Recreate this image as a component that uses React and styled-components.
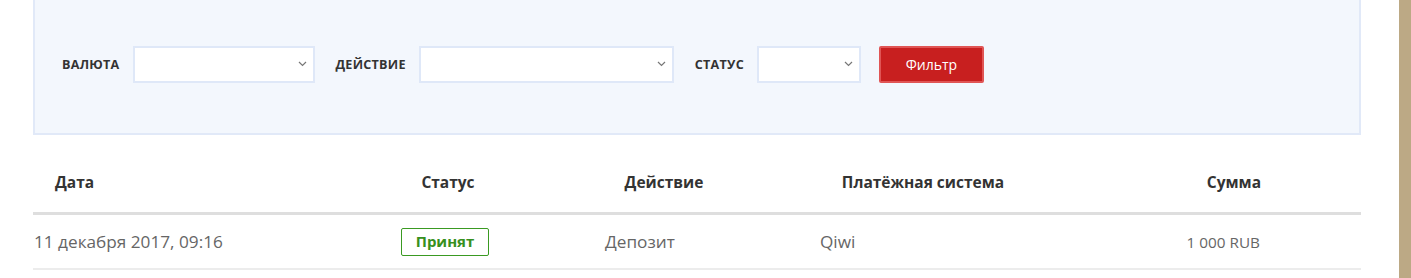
import React from "react";
import styled, { createGlobalStyle } from "styled-components";

const Global = createGlobalStyle`
  html, body { margin: 0; padding: 0; background: #fff; }
  body { font-family: "Open Sans", "Noto Sans", sans-serif; }
  * { box-sizing: border-box; }
`;

const Page = styled.div`
  display: flex;
  width: 1411px;
  height: 278px;
  overflow: hidden;
`;

const Main = styled.div`
  margin-left: 33px;
  width: 1328px;
  display: flex;
  flex-direction: column;
`;

const Side = styled.div`
  margin-left: auto;
  width: 12px;
  background: #bca985;
`;

const FilterPanel = styled.form`
  height: 135px;
  background: #f3f7fd;
  border: 2px solid #e1e9f8;
  border-top: none;
  display: flex;
  align-items: center;
  padding: 0 0 5px 27px;
`;

const Label = styled.label`
  font-size: 12.6px;
  font-weight: 700;
  letter-spacing: 0.25px;
  color: #333;
  text-transform: uppercase;
  margin-right: 13px;
`;

const SelectBox = styled.div`
  position: relative;
  width: ${(p) => p.$w}px;
  height: 37px;
  background: #fff;
  border: 2px solid #dfe8f8;
  margin-right: ${(p) => p.$mr ?? 21}px;
  svg {
    position: absolute;
    right: 6px;
    top: 50%;
    margin-top: -3px;
  }
`;

const Button = styled.button`
  width: 105px;
  height: 37px;
  background: #c81f1f;
  border: 2px solid #e05555;
  border-radius: 2px;
  color: #fff;
  font-family: "Open Sans", sans-serif;
  font-size: 14px;
  padding: 0;
`;

const Grid = styled.div`
  display: grid;
  grid-template-columns: 313px 204px 228px 290px 1fr;
`;

const HeadRow = styled(Grid)`
  height: 80px;
  border-bottom: 3px solid #dedede;
  align-items: center;
  padding-top: 16px;
`;

const BodyRow = styled(Grid)`
  height: 55px;
  border-bottom: 2px solid #ececec;
  align-items: center;
`;

const Th = styled.div`
  font-size: 15.5px;
  font-weight: 700;
  color: #333;
  text-align: ${(p) => p.$align || "center"};
  padding-left: ${(p) => p.$pl || 0}px;
  padding-right: ${(p) => p.$pr || 0}px;
`;

const Td = styled.div`
  font-size: ${(p) => p.$fs || 17.2}px;
  color: #666;
  text-align: ${(p) => p.$align || "left"};
  padding-left: ${(p) => p.$pl || 0}px;
  padding-right: ${(p) => p.$pr || 0}px;
`;

const Badge = styled.span`
  display: inline-block;
  width: 88px;
  height: 28px;
  line-height: 25px;
  border: 1px solid #3a9a22;
  border-radius: 2px;
  color: #379020;
  font-weight: 700;
  font-size: 15px;
  text-align: center;
  margin-right: 6px;
`;

const Chevron = () => (
  <svg width="9" height="6" viewBox="0 0 9 6">
    <path d="M1 1l3.5 3.5L8 1" fill="none" stroke="#777" strokeWidth="1.2" />
  </svg>
);

export default function App() {
  return (
    <>
      <Global />
      <Page>
        <Main>
          <FilterPanel>
            <Label>Валюта</Label>
            <SelectBox $w={182}><Chevron /></SelectBox>
            <Label>Действие</Label>
            <SelectBox $w={255}><Chevron /></SelectBox>
            <Label>Статус</Label>
            <SelectBox $w={104} $mr={18}><Chevron /></SelectBox>
            <Button type="button">Фильтр</Button>
          </FilterPanel>
          <HeadRow>
            <Th $align="left" $pl={22}>Дата</Th>
            <Th>Статус</Th>
            <Th>Действие</Th>
            <Th>Платёжная система</Th>
            <Th $align="right" $pr={100}>Сумма</Th>
          </HeadRow>
          <BodyRow>
            <Td $pl={1}>11 декабря 2017, 09:16</Td>
            <Td $align="center"><Badge>Принят</Badge></Td>
            <Td $pl={55}>Депозит</Td>
            <Td $pl={42}>Qiwi</Td>
            <Td $align="right" $pr={101} $fs={15.3}>1 000 RUB</Td>
          </BodyRow>
        </Main>
        <Side />
      </Page>
    </>
  );
}
